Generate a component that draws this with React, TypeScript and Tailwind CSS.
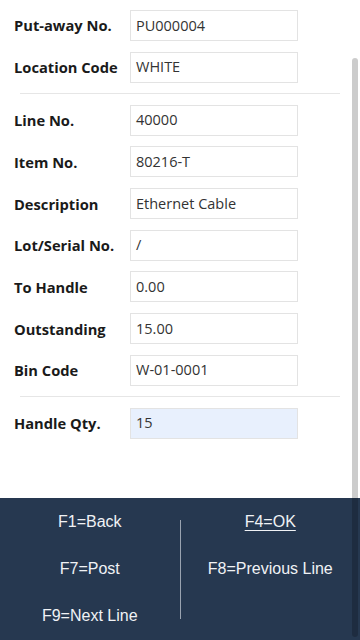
import React from 'react';

type Field = { label: string; value: string; highlight?: boolean };

const header: Field[] = [
  { label: 'Put-away No.', value: 'PU000004' },
  { label: 'Location Code', value: 'WHITE' },
];

const lines: Field[] = [
  { label: 'Line No.', value: '40000' },
  { label: 'Item No.', value: '80216-T' },
  { label: 'Description', value: 'Ethernet Cable' },
  { label: 'Lot/Serial No.', value: '/' },
  { label: 'To Handle', value: '0.00' },
  { label: 'Outstanding', value: '15.00' },
  { label: 'Bin Code', value: 'W-01-0001' },
];

const entry: Field[] = [{ label: 'Handle Qty.', value: '15', highlight: true }];

function Row({ label, value, highlight }: Field) {
  return (
    <div className="flex items-center h-[31px] mb-[10.7px]">
      <div className="w-[130px] pl-[14px] text-[14.7px] font-bold text-[#1a1a1a] whitespace-nowrap">{label}</div>
      <div
        className={`w-[168px] h-[31px] flex items-center px-[5px] border border-[#e3e3e3] text-[14.5px] text-[#333] ${
          highlight ? 'bg-[#e8f0fd]' : 'bg-white'
        }`}
      >
        {value}
      </div>
    </div>
  );
}

function Divider() {
  return <div className="mx-[20px] w-[320px] h-px bg-[#e6e6e6] -mt-[0.7px] mb-[11px]" />;
}

export default function App() {
  return (
    <div
      className="relative h-[640px] w-[360px] flex flex-col bg-white overflow-hidden"
      style={{ fontFamily: '"Open Sans", sans-serif' }}
    >
      <div className="flex-1 pt-[10px]">
        {header.map((f) => (
          <Row key={f.label} {...f} />
        ))}
        <Divider />
        {lines.map((f) => (
          <Row key={f.label} {...f} />
        ))}
        <Divider />
        {entry.map((f) => (
          <Row key={f.label} {...f} />
        ))}
      </div>

      <div
        className="h-[142px] bg-[#263850] flex text-[16px] text-[#f0f2f5]"
        style={{ fontFamily: '"Liberation Sans", Arial, sans-serif' }}
      >
        <div className="flex-1 flex flex-col">
          <div className="h-[47px] flex items-center justify-center">F1=Back</div>
          <div className="h-[47px] flex items-center justify-center">F7=Post</div>
          <div className="h-[47px] flex items-center justify-center">F9=Next Line</div>
        </div>
        <div className="w-px h-[99px] self-center bg-[#9aa3b0]" />
        <div className="flex-1 flex flex-col">
          <div className="h-[47px] flex items-center justify-center">
            <span className="underline underline-offset-[3px]">F4=OK</span>
          </div>
          <div className="h-[47px] flex items-center justify-center">F8=Previous Line</div>
        </div>
      </div>

      <div className="absolute right-[2px] top-[58px] bottom-[3px] w-[6px] rounded-[3px] bg-black/20" />
    </div>
  );
}
